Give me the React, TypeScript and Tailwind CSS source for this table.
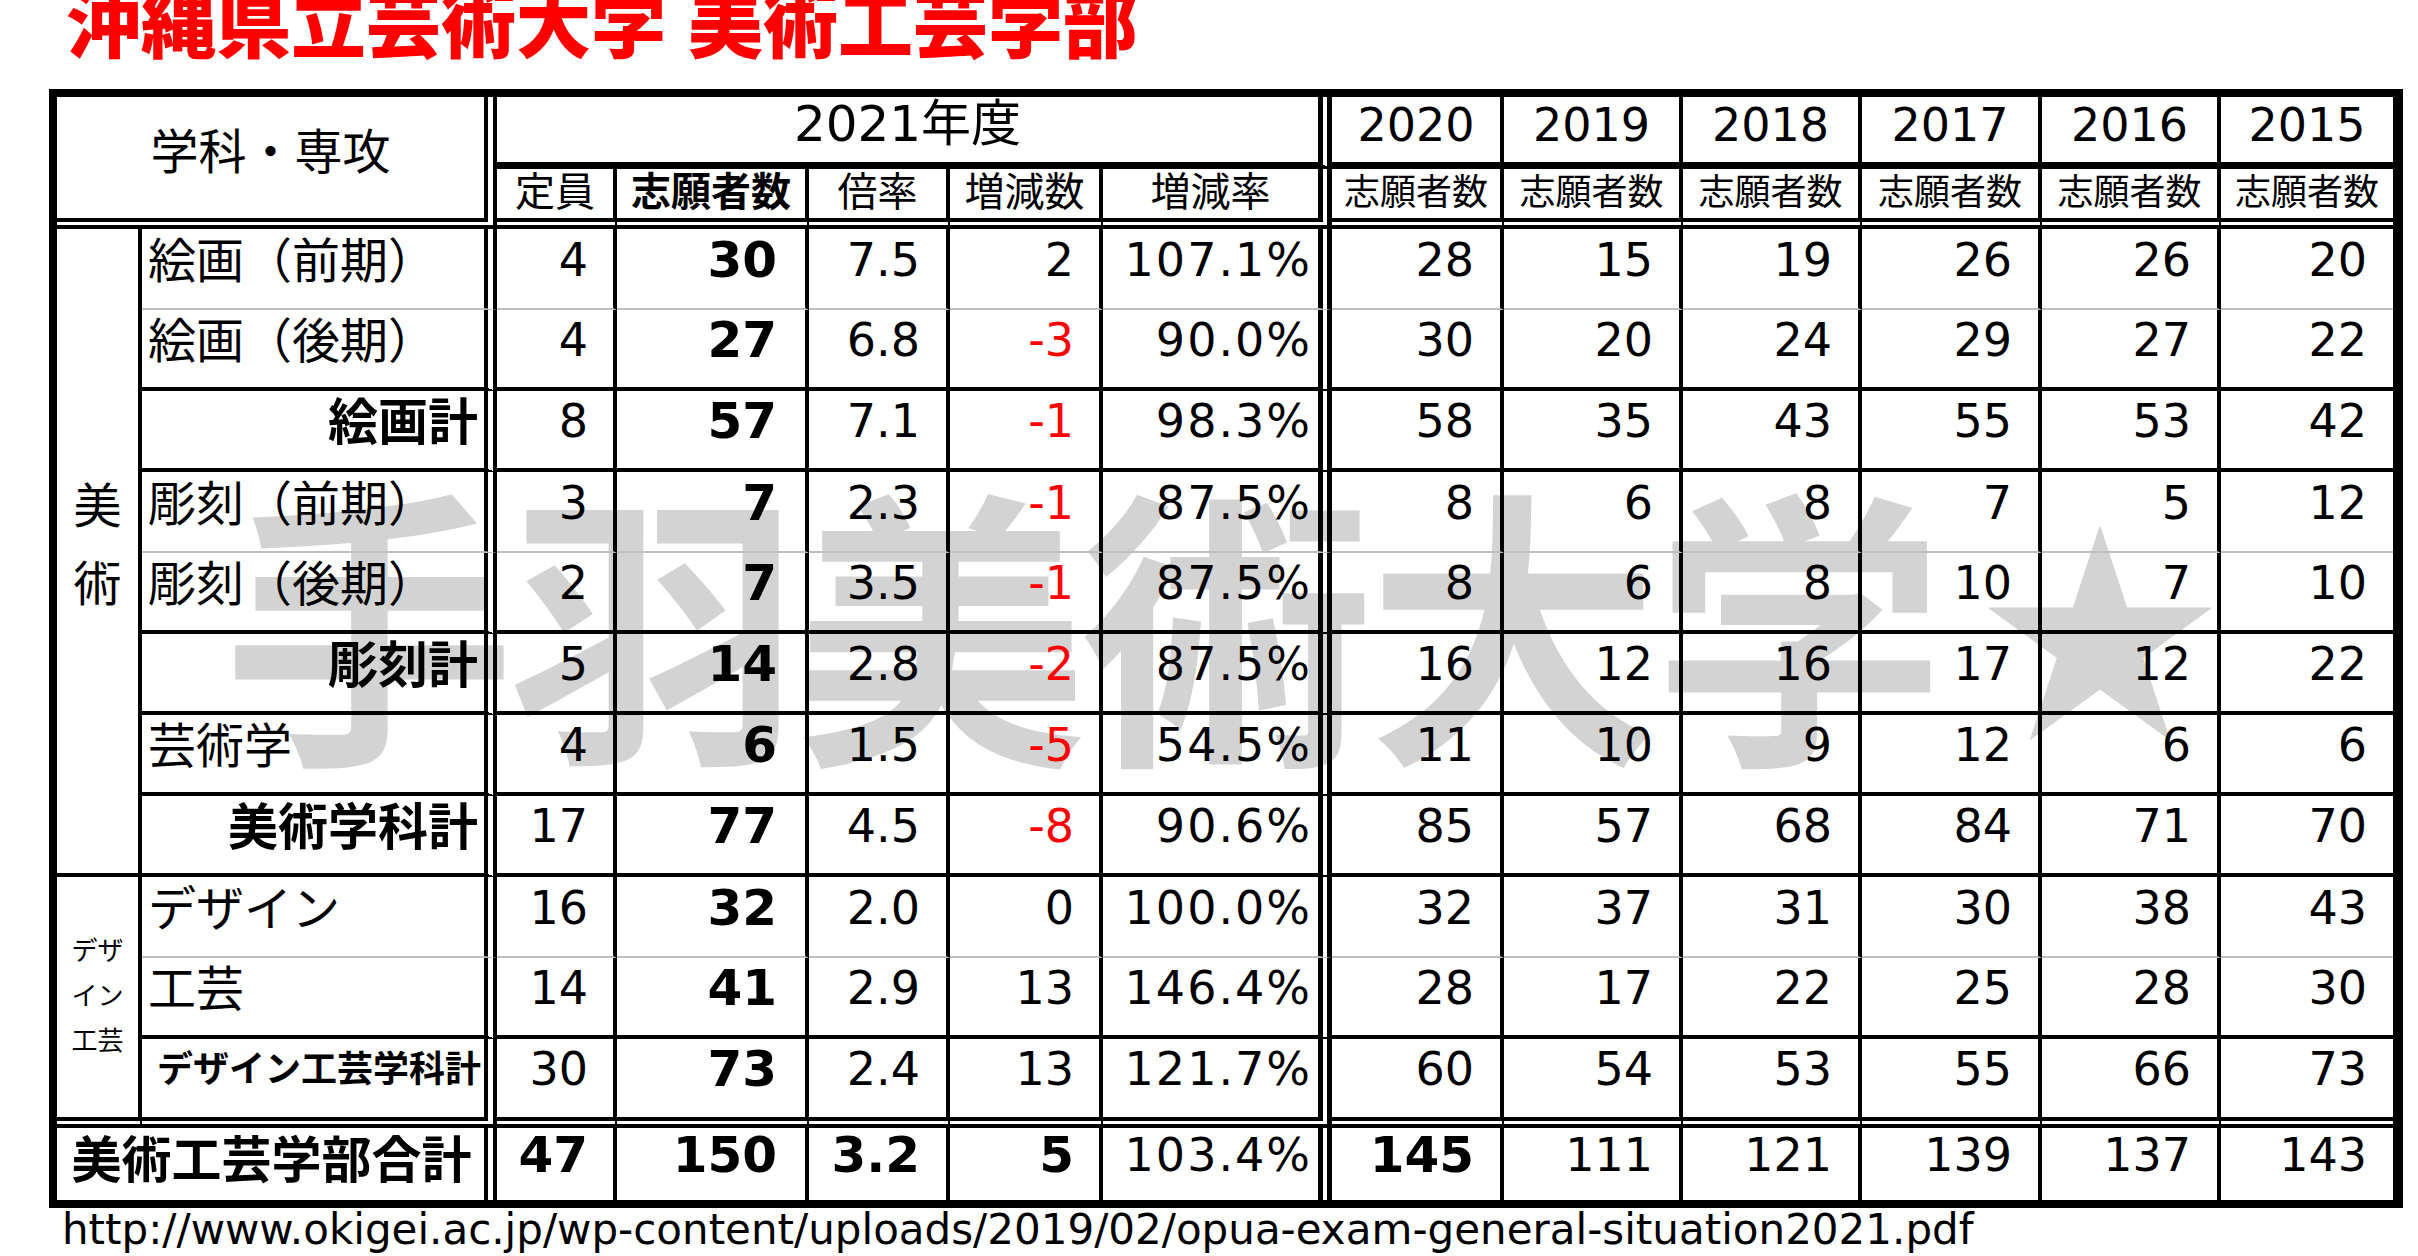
import React from "react";

const JP = "font-['Noto_Sans_CJK_JP',sans-serif]";
const NUM = "font-['DejaVu_Sans','Noto_Sans_CJK_JP',sans-serif]";

// right border of each grid column (0 = group, 1 = label, 2..12 = values)
const RIGHT = [
  "border-r-4",
  "[border-right:13px_double_#000]",
  "border-r-4",
  "border-r-4",
  "border-r-4",
  "border-r-4",
  "[border-right:14px_double_#000]",
  "border-r-4",
  "border-r-4",
  "border-r-4",
  "border-r-4",
  "border-r-4",
  "",
];

const PAD = [
  "",
  "",
  "pr-[25px]",
  "pr-[28px]",
  "pr-[26px]",
  "pr-[25px]",
  "pr-[6px] tracking-[2px]",
  "pr-[26px]",
  "pr-[26px]",
  "pr-[26px]",
  "pr-[26px]",
  "pr-[26px]",
  "pr-[26px]",
];

type Line = "gray" | "black" | "double" | "none";

const BOTTOM: Record<Line, string> = {
  gray: "border-b-2 border-b-[#bfbfbf]",
  black: "border-b-4",
  double: "[border-bottom:11px_double_#000]",
  none: "",
};

type Row = {
  label: string;
  kind: "item" | "sub" | "small";
  line: Line;
  v: (number | string)[];
};

const rows: Row[] = [
  { label: "絵画（前期）", kind: "item", line: "gray", v: [4, 30, "7.5", 2, "107.1%", 28, 15, 19, 26, 26, 20] },
  { label: "絵画（後期）", kind: "item", line: "black", v: [4, 27, "6.8", -3, "90.0%", 30, 20, 24, 29, 27, 22] },
  { label: "絵画計", kind: "sub", line: "black", v: [8, 57, "7.1", -1, "98.3%", 58, 35, 43, 55, 53, 42] },
  { label: "彫刻（前期）", kind: "item", line: "gray", v: [3, 7, "2.3", -1, "87.5%", 8, 6, 8, 7, 5, 12] },
  { label: "彫刻（後期）", kind: "item", line: "black", v: [2, 7, "3.5", -1, "87.5%", 8, 6, 8, 10, 7, 10] },
  { label: "彫刻計", kind: "sub", line: "black", v: [5, 14, "2.8", -2, "87.5%", 16, 12, 16, 17, 12, 22] },
  { label: "芸術学", kind: "item", line: "black", v: [4, 6, "1.5", -5, "54.5%", 11, 10, 9, 12, 6, 6] },
  { label: "美術学科計", kind: "sub", line: "black", v: [17, 77, "4.5", -8, "90.6%", 85, 57, 68, 84, 71, 70] },
  { label: "デザイン", kind: "item", line: "gray", v: [16, 32, "2.0", 0, "100.0%", 32, 37, 31, 30, 38, 43] },
  { label: "工芸", kind: "item", line: "black", v: [14, 41, "2.9", 13, "146.4%", 28, 17, 22, 25, 28, 30] },
  { label: "デザイン工芸学科計", kind: "small", line: "double", v: [30, 73, "2.4", 13, "121.7%", 60, 54, 53, 55, 66, 73] },
];

const total = [47, 150, "3.2", 5, "103.4%", 145, 111, 121, 139, 137, 143];
const totalBold = [true, true, true, true, false, true, false, false, false, false, false];

const years = ["2020", "2019", "2018", "2017", "2016", "2015"];
const subHeads = ["定員", "志願者数", "倍率", "増減数", "増減率"];

function ValueCell({ col, line, value, bold }: { col: number; line: Line; value: number | string; bold: boolean }) {
  const neg = typeof value === "number" && value < 0;
  return (
    <div className={`flex items-center justify-end pb-[18px] ${RIGHT[col]} ${BOTTOM[line]} ${PAD[col]} ${NUM} ${bold ? "text-[50px] font-bold" : "text-[46px]"} leading-none`}>
      <span className={neg ? "text-[#ff0000]" : "text-black"}>{String(value)}</span>
    </div>
  );
}

function LabelCell({ row }: { row: Row }) {
  const kind =
    row.kind === "item"
      ? "justify-start pl-[6px] text-[48px]"
      : row.kind === "sub"
        ? "justify-end pr-[6px] text-[50px] font-bold"
        : "justify-end pr-[3px] text-[36px] font-bold";
  return (
    <div className={`flex items-center pb-[24px] leading-none whitespace-nowrap ${RIGHT[1]} ${BOTTOM[row.line]} ${kind} ${JP}`}>
      {row.label}
    </div>
  );
}

function Watermark() {
  const chars = ["手", "羽", "美", "術", "大", "学"];
  return (
    <div className={`absolute left-[226px] top-[470px] flex text-[292px] font-bold leading-none text-[#d3d3d3] select-none ${JP}`}>
      {chars.map((c) => (
        <span key={c} className="flex w-[286px] justify-center">
          {c}
        </span>
      ))}
      <span className="flex w-[286px] justify-center pl-[30px] pt-[30px] text-[240px]">★</span>
    </div>
  );
}

export default function App() {
  return (
    <div className={`relative h-[1256px] w-[2418px] overflow-hidden bg-white text-black ${JP}`}>
      <Watermark />

      <h1 className="relative ml-[66px] mt-[-18px] flex gap-[22px] text-[75px] font-black leading-none text-[#ff0000] whitespace-nowrap">
        <span>沖縄県立芸術大学</span>
        <span>美術工芸学部</span>
      </h1>

      <div className="relative ml-[49px] mt-[32px] grid w-[2354px] grid-cols-[85px_355px_120px_192px_141px_153px_229px_172px_179px_179px_180px_179px_172px] grid-rows-[72px_60px_repeat(10,81px)_89px_72px] border-t-8 border-l-8 border-r-[10px] border-b-8 border-black">
        {/* fixed-position spanning cells */}
        <div className="col-start-1 col-end-3 row-start-1 row-end-3 flex items-center justify-center pb-[20px] text-[48px] leading-none [border-right:13px_double_#000] [border-bottom:11px_double_#000]">
          学科・専攻
        </div>
        <div className={`col-start-3 col-end-8 row-start-1 row-end-2 flex items-center justify-center pb-[12px] text-[50px] leading-none border-b-[7px] [border-right:14px_double_#000] ${NUM}`}>
          2021年度
        </div>
        <div className="col-start-1 row-start-3 row-end-11 flex flex-col items-center justify-center pb-[20px] text-[48px] leading-[78px] border-r-4 border-b-4">
          <span>美</span>
          <span>術</span>
        </div>
        <div className="col-start-1 row-start-11 row-end-14 flex flex-col items-center justify-center pb-[8px] text-[26px] leading-[45px] border-r-4 [border-bottom:11px_double_#000]">
          <span>デザ</span>
          <span>イン</span>
          <span>工芸</span>
        </div>
        <div className="col-start-1 col-end-3 row-start-14 row-end-15 flex items-center justify-center pb-[16px] pl-[2px] text-[50px] font-bold leading-none whitespace-nowrap [border-right:13px_double_#000]">
          美術工芸学部合計
        </div>

        {/* year headers */}
        {years.map((y, i) => (
          <div key={y} className={`flex items-center justify-center pb-[10px] text-[46px] leading-none border-b-[7px] ${RIGHT[7 + i]} ${NUM}`}>
            {y}
          </div>
        ))}

        {/* sub headers */}
        {subHeads.map((h, i) => (
          <div
            key={h}
            className={`flex items-center justify-center pb-[10px] text-[40px] leading-none whitespace-nowrap ${i === 1 ? "font-bold" : ""} ${RIGHT[2 + i]} [border-bottom:11px_double_#000]`}
          >
            {h}
          </div>
        ))}
        {years.map((y, i) => (
          <div key={"s" + y} className={`flex items-center justify-center pb-[10px] text-[36px] leading-none whitespace-nowrap ${RIGHT[7 + i]} [border-bottom:11px_double_#000]`}>
            志願者数
          </div>
        ))}

        {/* body */}
        {rows.map((r) => (
          <React.Fragment key={r.label}>
            <LabelCell row={r} />
            {r.v.map((val, j) => (
              <ValueCell key={j} col={2 + j} line={r.line} value={val} bold={j === 1} />
            ))}
          </React.Fragment>
        ))}

        {/* total */}
        {total.map((val, j) => (
          <ValueCell key={"t" + j} col={2 + j} line="none" value={val} bold={totalBold[j]} />
        ))}
      </div>

      <div className={`ml-[62px] mt-[1px] text-[42px] leading-none whitespace-nowrap ${NUM}`}>
        http://www.okigei.ac.jp/wp-content/uploads/2019/02/opua-exam-general-situation2021.pdf
      </div>
    </div>
  );
}
